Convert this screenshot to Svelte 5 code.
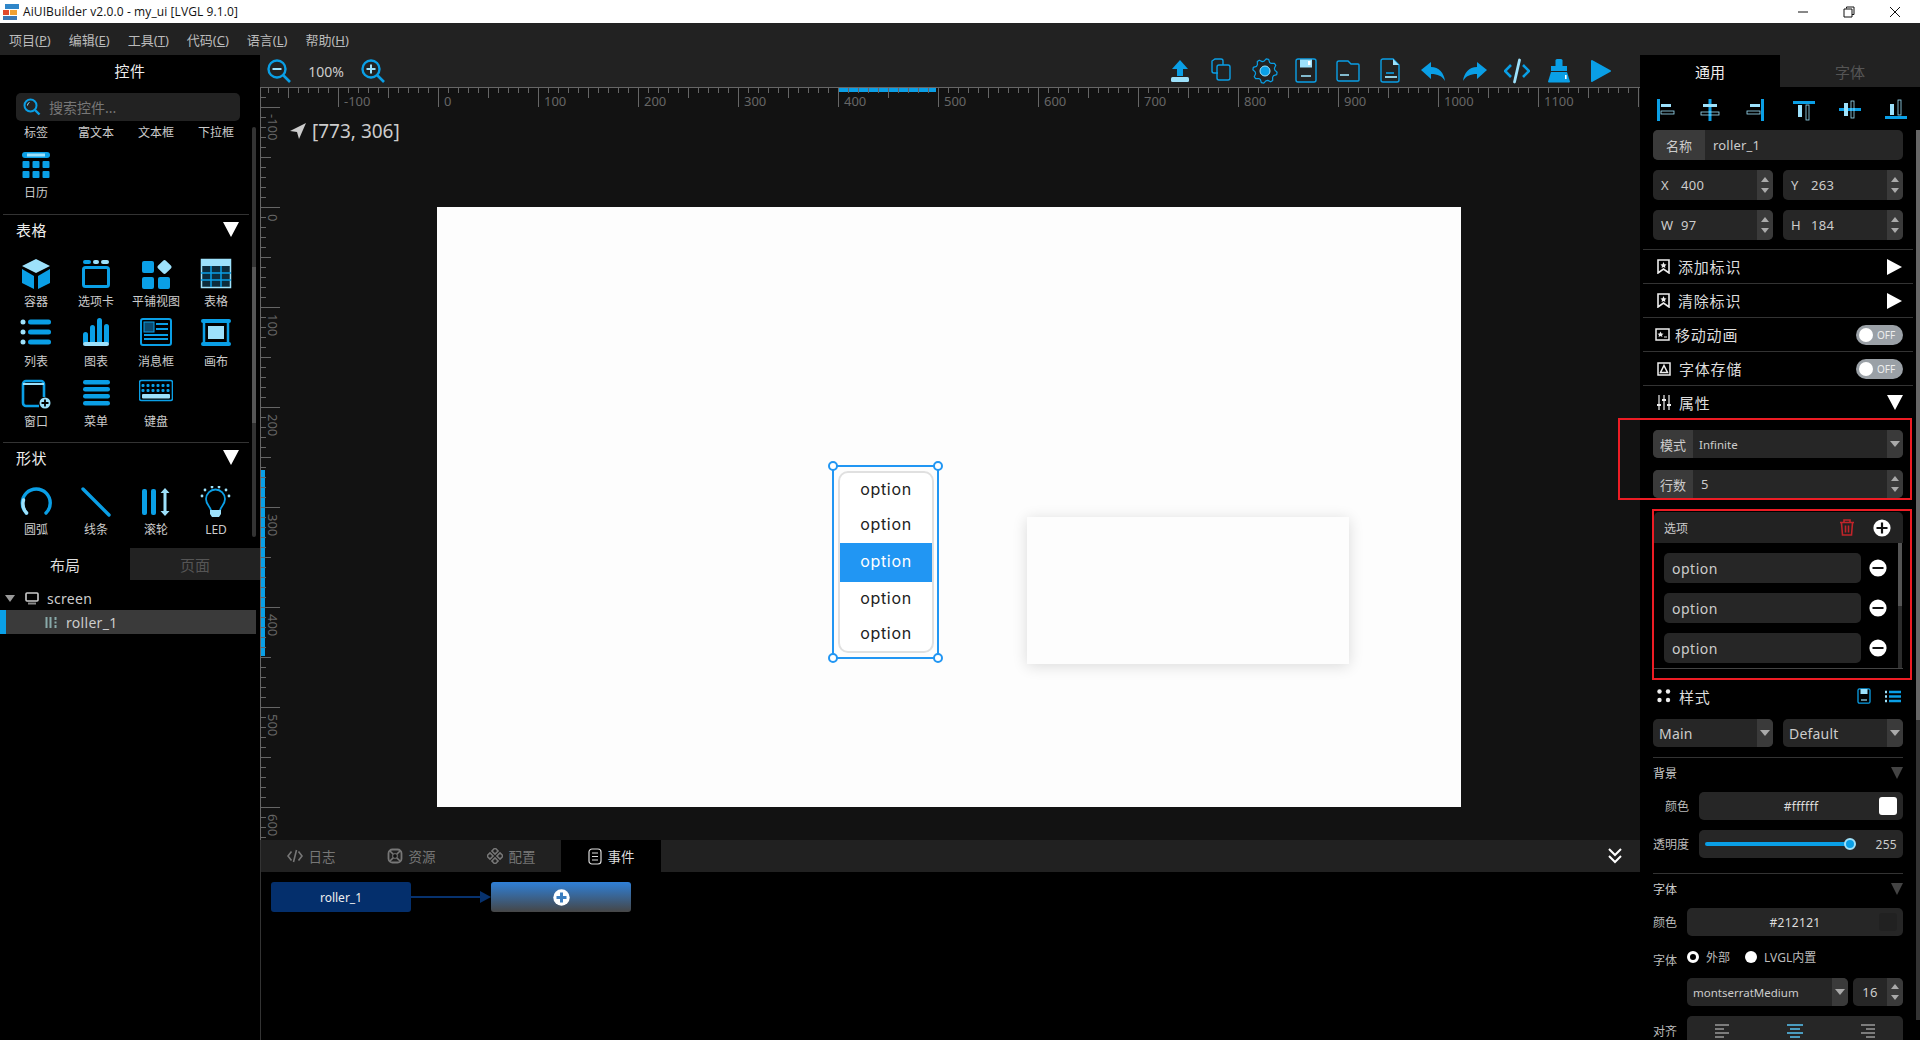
<script>
  const B = '#0a9fe6';
  const L = '#9de1fb';

  // widget palette icons, drawn on a 32x32 box
  const icons = {
    calendar: `<rect x="2" y="3" width="28" height="6" rx="3" fill="${B}"/><rect x="7" y="4.5" width="18" height="3" fill="${L}"/>` +
      [2.5, 12.5, 22.5].map((x) => [12, 22].map((y) => `<rect x="${x}" y="${y}" width="7" height="7" rx="1" fill="${B}"/>`).join('')).join(''),
    container: `<polygon points="16,1 30,8 16,15 2,8" fill="${L}"/><polygon points="2,11 14,18 14,31 2,25" fill="${B}"/><polygon points="30,11 18,18 18,31 30,25" fill="${B}"/>`,
    tab: `<rect x="3" y="2" width="8" height="4" rx="2" fill="${B}"/><rect x="13" y="2" width="6" height="4" rx="2" fill="${L}"/><rect x="21" y="2" width="8" height="4" rx="2" fill="${L}"/><rect x="3.5" y="9.5" width="25" height="19" rx="2" fill="none" stroke="${B}" stroke-width="3"/>`,
    tile: `<rect x="2" y="3" width="12" height="12" rx="2" fill="${B}"/><rect x="19" y="3.5" width="11" height="11" rx="2" fill="${L}" transform="rotate(45 24.5 9)"/><rect x="2" y="19" width="12" height="12" rx="2" fill="${B}"/><rect x="18" y="19" width="12" height="12" rx="2" fill="${B}"/>`,
    table: `<rect x="1.5" y="1.5" width="29" height="28" fill="#0c2c3c" stroke="${L}" stroke-width="1.5"/><rect x="1" y="1" width="30" height="7" fill="${L}"/><path d="M11 8v21M21 8v21M1 15h30M1 22h30" stroke="${B}" stroke-width="1.5"/>`,
    list: `<circle cx="3" cy="4" r="2.5" fill="${L}"/><rect x="8" y="1.5" width="23" height="5" rx="2.5" fill="${B}"/><circle cx="3" cy="14" r="2.5" fill="${L}"/><rect x="8" y="11.5" width="23" height="5" rx="2.5" fill="${B}"/><circle cx="3" cy="24" r="2.5" fill="${L}"/><rect x="8" y="21.5" width="23" height="5" rx="2.5" fill="${B}"/>`,
    chart: `<rect x="3" y="14" width="5" height="12" rx="2.5" fill="${B}"/><rect x="10" y="7" width="5" height="19" rx="2.5" fill="${B}"/><rect x="17" y="0" width="5" height="26" rx="2.5" fill="${B}"/><rect x="24" y="6" width="5" height="20" rx="2.5" fill="${B}"/><rect x="3" y="24" width="26" height="4" rx="2" fill="${L}"/>`,
    msgbox: `<rect x="1" y="1" width="30" height="26" rx="2" fill="none" stroke="${B}" stroke-width="2"/><rect x="4" y="4" width="10" height="10" fill="#0b4a6e" stroke="${B}"/><path d="M16 6h12M16 11h12M4 17h24M4 21h24" stroke="${B}" stroke-width="1.8"/>`,
    canvas: `<rect x="4" y="3" width="24" height="23" fill="none" stroke="${B}" stroke-width="2.5"/><rect x="8" y="8" width="16" height="13" fill="${L}"/><rect x="1" y="1" width="30" height="4" rx="2" fill="${B}"/><rect x="1" y="24" width="30" height="4" rx="2" fill="${B}"/>`,
    window: `<path d="M24 19V6a3 3 0 0 0-3-3H6a3 3 0 0 0-3 3v19a3 3 0 0 0 3 3h13" fill="none" stroke="${B}" stroke-width="2.6"/><path d="M3 6h21" stroke="${L}" stroke-width="2"/><circle cx="25" cy="25" r="5.5" fill="${L}"/><path d="M25 21.5v7M21.5 25h7" stroke="#000" stroke-width="1.8"/>`,
    menu: `<rect x="3" y="2" width="27" height="4.5" rx="2.2" fill="${B}"/><rect x="3" y="9" width="27" height="4.5" rx="2.2" fill="${B}"/><rect x="3" y="16" width="27" height="4.5" rx="2.2" fill="${B}"/><rect x="3" y="23" width="27" height="4.5" rx="2.2" fill="${B}"/>`,
    keyboard: `<rect x="0.5" y="0.5" width="33" height="20" rx="2" fill="none" stroke="${B}" stroke-width="1.6"/>` +
      [3.5, 8.5, 13.5, 18.5, 23.5, 28.5].map((x) => `<rect x="${x - 1}" y="4" width="3" height="3" rx="1" fill="${B}"/><rect x="${x - 1}" y="9" width="3" height="3" rx="1" fill="${B}"/>`).join('') +
      `<rect x="3" y="14" width="28" height="4.5" rx="1" fill="${L}"/>`,
    arc: `<path d="M6.5 27A14 14 0 1 1 26 27" fill="none" stroke="${B}" stroke-width="3.4" stroke-linecap="round"/><path d="M6.5 27A14 14 0 0 1 3.5 14" fill="none" stroke="${L}" stroke-width="3.4" stroke-linecap="round"/>`,
    line: `<path d="M3 3L29 29" stroke="${B}" stroke-width="3.4" stroke-linecap="round"/>`,
    roller: `<rect x="2" y="3" width="5" height="26" rx="2" fill="${B}"/><rect x="11" y="3" width="5" height="26" rx="2" fill="${B}"/><path d="M25 2l4.5 5h-3v18h3L25 30l-4.5-5h3V7h-3z" fill="${L}"/>`,
    led: `<path d="M11 25c0-4-5-6-5-12a9.5 9.5 0 0 1 19 0c0 6-5 8-5 12" fill="none" stroke="${B}" stroke-width="1.8"/><path d="M10 24h11v4l-2 3h-7l-2-3z" fill="${L}"/><circle cx="2" cy="10" r="1.4" fill="${L}"/><circle cx="5" cy="4" r="1.4" fill="${L}"/><circle cx="12" cy="1" r="1.4" fill="${L}"/><circle cx="19" cy="1" r="1.4" fill="${L}"/><circle cx="26" cy="4" r="1.4" fill="${L}"/><circle cx="29" cy="10" r="1.4" fill="${L}"/>`
  };

  // 8 toothed gear outline
  const gear = Array.from({ length: 32 }, (_, i) => {
    const a = (i / 32) * Math.PI * 2 + 0.1;
    const r = i % 4 < 2 ? 12.2 : 9.8;
    return `${(13 + r * Math.cos(a)).toFixed(1)},${(13 + r * Math.sin(a)).toFixed(1)}`;
  }).join(' ');

  const tools = [
    `<path d="M12 2l8 9h-5v7H9v-7H4z" fill="${B}"/><rect x="3" y="19" width="18" height="5" rx="1.5" fill="${L}"/>`,
    `<path d="M8 15H4a2 2 0 0 1-2-2V3l3-2h6a2 2 0 0 1 2 2v4" fill="none" stroke="${B}" stroke-width="1.4"/><rect x="7" y="7" width="13" height="15" rx="2" fill="none" stroke="${B}" stroke-width="1.4"/>`,
    `<polygon points="${gear}" fill="none" stroke="${B}" stroke-width="1.2" stroke-linejoin="round"/><circle cx="13" cy="13" r="5" fill="${B}" stroke="${L}" stroke-width="1"/>`,
    `<rect x="2" y="1" width="20" height="23" rx="2" fill="none" stroke="${B}" stroke-width="1.4"/><path d="M6 1.5h12v8H6z" fill="${L}"/><rect x="14" y="3" width="2.5" height="4" fill="#fff"/><path d="M7 18h10" stroke="${L}" stroke-width="1.6"/>`,
    `<path d="M1 5a2 2 0 0 1 2-2h9l3 3h7a1 1 0 0 1 1 1v15a1 1 0 0 1-1 1H3a2 2 0 0 1-2-2z" fill="none" stroke="${B}" stroke-width="1.4"/><path d="M4 17h9" stroke="${L}" stroke-width="1.6"/>`,
    `<path d="M3 3a2 2 0 0 1 2-2h10l6 6v15a2 2 0 0 1-2 2H5a2 2 0 0 1-2-2z" fill="none" stroke="${B}" stroke-width="1.4"/><path d="M15 1l6 6h-6z" fill="${L}"/><path d="M8 15h8" stroke="${B}" stroke-width="1.6"/><path d="M7 19h12" stroke="${L}" stroke-width="1.8"/>`,
    `<path d="M1 12l10-8v5c8 0 13 6 14 14-3-5-7-7-14-7v5z" fill="${B}"/>`,
    `<path d="M25 12L15 4v5C7 9 2 15 1 23c3-5 7-7 14-7v5z" fill="${B}"/>`,
    `<path d="M7 7l-6 6 6 6" fill="none" stroke="${B}" stroke-width="2.6"/><path d="M19 7l6 6-6 6" fill="none" stroke="${B}" stroke-width="2.6"/><path d="M15.5 2l-5 22" stroke="${L}" stroke-width="2.8" stroke-linecap="round"/>`,
    `<rect x="9.5" y="1" width="7" height="8" rx="1.5" fill="${B}"/><rect x="5" y="8" width="16" height="5" fill="${B}"/><path d="M5 14h16l3 9.500a1 1 0 0 1-1 1H3a1 1 0 0 1-1-1z" fill="${B}"/><rect x="19" y="17" width="1.6" height="4" fill="#fff"/>`,
    `<path d="M4 3l18 10L4 23z" fill="${B}" stroke="${B}" stroke-linejoin="round" stroke-width="2"/>`
  ];

  const aligns = [
    `<g transform="translate(2 0)"><rect x="1" y="1" width="3" height="22" fill="${B}"/><rect x="5" y="6" width="10" height="3" fill="${L}"/><rect x="5" y="13" width="13" height="3" fill="none" stroke="${L}" stroke-width="0.8"/></g>`,
    `<g transform="translate(-2 0)"><rect x="10.5" y="1" width="3" height="22" fill="${B}"/><rect x="5" y="6" width="14" height="3" fill="${L}"/><rect x="3" y="14" width="18" height="3" fill="none" stroke="${L}" stroke-width="0.8"/></g>`,
    `<g transform="translate(-5 0)"><rect x="20" y="1" width="3" height="22" fill="${B}"/><rect x="9" y="6" width="10" height="3" fill="${L}"/><rect x="6" y="13" width="13" height="3" fill="none" stroke="${L}" stroke-width="0.8"/></g>`,
    `<rect x="1" y="3" width="22" height="3" fill="${B}"/><rect x="6" y="7" width="4" height="12" fill="${L}"/><rect x="14" y="7" width="3" height="15" fill="none" stroke="${L}" stroke-width="0.8"/>`,
    `<rect x="1" y="10" width="22" height="3" fill="${B}"/><rect x="6" y="5" width="4" height="13" fill="${L}"/><rect x="13" y="3" width="3" height="17" fill="none" stroke="${L}" stroke-width="0.8"/>`,
    `<rect x="1" y="18" width="22" height="3" fill="${B}"/><rect x="6" y="6" width="4" height="11" fill="${L}"/><rect x="14" y="2" width="3" height="15" fill="none" stroke="${L}" stroke-width="0.8"/>`
  ];

  const menus = [['项目(', 'P', ')'], ['编辑(', 'E', ')'], ['工具(', 'T', ')'], ['代码(', 'C', ')'], ['语言(', 'L', ')'], ['帮助(', 'H', ')']];

  const partial = [['标签'], ['富文本'], ['文本框'], ['下拉框'], ['日历', 'calendar']];
  const tableItems = [
    ['容器', 'container'], ['选项卡', 'tab'], ['平铺视图', 'tile'], ['表格', 'table'],
    ['列表', 'list'], ['图表', 'chart'], ['消息框', 'msgbox'], ['画布', 'canvas'],
    ['窗口', 'window'], ['菜单', 'menu'], ['键盘', 'keyboard']
  ];
  const shapeItems = [['圆弧', 'arc'], ['线条', 'line'], ['滚轮', 'roller'], ['LED', 'led']];

  const ox = 178;
  const oy = 120;
  const hTicks = [];
  for (let v = -170; v <= 1200; v += 10) hTicks.push(v);
  const vTicks = [];
  for (let v = -110; v <= 630; v += 10) vTicks.push(v);
  const tickLen = (v) => (v % 100 === 0 ? 20 : v % 50 === 0 ? 11 : 6);
</script>

{#snippet spin()}<span class="spin"><span class="tri up"></span><span class="tri down"></span></span>{/snippet}
{#snippet drop()}<span class="drop"><span class="tri big"></span></span>{/snippet}
{#snippet bookmark()}
  <svg class="ric" width="13" height="15" viewBox="0 0 13 15"><path d="M1 1h11v13l-5.5-4L1 14z" fill="none" stroke="#eee" stroke-width="1.6"/><path d="M6.500 3l1 2.200 2 .2-1.500 1.500.4 2-1.900-1-1.900 1 .4-2L3.500 5.400l2-.2z" fill="#eee"/></svg>
{/snippet}
{#snippet circle(kind)}
  <svg width="18" height="18" viewBox="0 0 18 18"><circle cx="9" cy="9" r="8.600" fill="#fff"/><path d={kind === 'plus' ? 'M3.500 9h11M9 3.500v11' : 'M3.500 9h11'} stroke="#111" stroke-width="2.200"/></svg>
{/snippet}
{#snippet alignLines(color, lo)}
  <svg width="16" height="14" viewBox="0 0 16 14"><path d={lo} stroke={color} stroke-width="1.600"/></svg>
{/snippet}

<div class="app">
  <header class="titlebar">
    <svg class="logo" width="16" height="16" viewBox="0 0 16 16"><rect x="2" y="0" width="14" height="5" fill="#2f86c9"/><rect x="0" y="6" width="6" height="5" fill="#e2492b"/><rect x="7" y="6" width="7" height="5" fill="#f0a033"/><rect x="0" y="12" width="14" height="4" fill="#3c78b5"/></svg>
    <span class="apptitle">AiUIBuilder v2.0.0 - my_ui [LVGL 9.1.0]</span>
    <div class="winctl">
      <span class="wbtn"><svg width="12" height="12" viewBox="0 0 12 12"><path d="M1 6h10" stroke="#111"/></svg></span>
      <span class="wbtn"><svg width="12" height="12" viewBox="0 0 12 12"><path d="M3.500 2.500V1h7.500v7.500H9M1 3h8v8H1z" fill="none" stroke="#111"/></svg></span>
      <span class="wbtn"><svg width="12" height="12" viewBox="0 0 12 12"><path d="M1 1l10 10M11 1L1 11" stroke="#111"/></svg></span>
    </div>
  </header>

  <nav class="menubar">
    {#each menus as m}
      <span class="menu">{m[0]}<u>{m[1]}</u>{m[2]}</span>
    {/each}
  </nav>

  <div class="main">
    <aside class="left">
      <div class="ltitle">控件</div>
      <label class="search">
        <svg width="18" height="18" viewBox="0 0 18 18"><circle cx="7.500" cy="7.500" r="6" fill="none" stroke="#0a9fe6" stroke-width="2"/><path d="M12 12l4.500 4.500" stroke="#0a9fe6" stroke-width="2.400"/><path d="M4.500 7.500a3 3 0 0 1 2-3" stroke="#9de1fb" fill="none"/></svg>
        <span>搜索控件...</span>
      </label>

      <div class="palette">
        <div class="pinner">
          <section class="pgroup first">
            <div class="pgrid">
              {#each partial as it}
                <div class="pitem">
                  <svg class="picon" width="32" height="32" viewBox="0 0 32 32">{#if it[1]}{@html icons[it[1]]}{/if}</svg>
                  <span>{it[0]}</span>
                </div>
              {/each}
            </div>
          </section>
          <section class="pgroup">
            <div class="phead"><span>表格</span><span class="tri white"></span></div>
            <div class="pgrid">
              {#each tableItems as it}
                <div class="pitem">
                  <svg class="picon" width={it[1] === 'keyboard' ? 34 : 32} height="32" viewBox={it[1] === 'keyboard' ? '0 -2 34 32' : '0 0 32 32'}>{@html icons[it[1]]}</svg>
                  <span>{it[0]}</span>
                </div>
              {/each}
            </div>
          </section>
          <section class="pgroup last">
            <div class="phead"><span>形状</span><span class="tri white"></span></div>
            <div class="pgrid">
              {#each shapeItems as it}
                <div class="pitem">
                  <svg class="picon" width="32" height="32" viewBox="0 0 32 32">{@html icons[it[1]]}</svg>
                  <span>{it[0]}</span>
                </div>
              {/each}
            </div>
          </section>
        </div>
        <div class="ptrack"><div class="pthumb"></div></div>
      </div>

      <div class="ltabs">
        <span class="ltab on">布局</span>
        <span class="ltab">页面</span>
      </div>
      <div class="tree">
        <div class="tnode">
          <span class="tri small"></span>
          <svg width="14" height="13" viewBox="0 0 14 13"><rect x="1" y="1" width="12" height="8" rx="1" fill="none" stroke="#ccc" stroke-width="1.600"/><rect x="3" y="10.500" width="8" height="2" fill="#888"/></svg>
          <span>screen</span>
        </div>
        <div class="tnode sel">
          <svg width="13" height="13" viewBox="0 0 13 13"><path d="M1.500 1v11M5.500 1v11" stroke="#8aa" stroke-width="2"/><path d="M10.500 1v3M10.500 5.500v2M10.500 9v3" stroke="#8aa" stroke-width="2"/></svg>
          <span>roller_1</span>
        </div>
      </div>
    </aside>

    <div class="center">
      <div class="toolbar">
        <svg class="zoomic" width="24" height="24" viewBox="0 0 24 24"><circle cx="10" cy="10" r="8.500" fill="none" stroke="#0a9fe6" stroke-width="2.400"/><path d="M16 16l7 7" stroke="#0a9fe6" stroke-width="2.600"/><path d="M5.500 10h9" stroke="#9de1fb" stroke-width="2"/></svg>
        <span class="pct">100%</span>
        <svg class="zoomic" width="24" height="24" viewBox="0 0 24 24"><circle cx="10" cy="10" r="8.500" fill="none" stroke="#0a9fe6" stroke-width="2.400"/><path d="M16 16l7 7" stroke="#0a9fe6" stroke-width="2.600"/><path d="M5.500 10h9M10 5.500v9" stroke="#9de1fb" stroke-width="2"/></svg>
        <div class="tools">
          {#each tools as t}
            <span class="tool"><svg width="26" height="26" viewBox="0 0 26 26">{@html t}</svg></span>
          {/each}
        </div>
      </div>

      <div class="canvas">
        <svg class="ruler" width="1380" height="753" shape-rendering="crispEdges">
          <rect x="579" y="1" width="97" height="4" fill="#0a9fe6"/>
          <rect x="1" y="383" width="4" height="186" fill="#0a9fe6"/>
          <path d="M0 0.500H1380M0.500 0V753" stroke="#666"/>
          {#each hTicks as v}
            <path d="M{ox + v + 0.5} 0V{tickLen(v)}" stroke="#666" stroke-width={v % 100 === 0 ? 1.500 : 1}/>
            {#if v % 100 === 0 && v < 1200}
              <text x={ox + v + 6} y="19" class="rlabel">{v}</text>
            {/if}
          {/each}
          {#each vTicks as v}
            <path d="M0 {oy + v + 0.5}H{tickLen(v)}" stroke="#666" stroke-width={v % 100 === 0 ? 1.500 : 1}/>
            {#if v % 100 === 0}
              <text transform="translate(8 {oy + v + 7}) rotate(90)" class="rlabel">{v}</text>
            {/if}
          {/each}
        </svg>

        <div class="coords">
          <svg width="16" height="16" viewBox="0 0 16 16"><path d="M16 0L0 8l7 1 2 7z" fill="#ccc"/></svg>
          <span>[773, 306]</span>
        </div>

        <div class="screen">
          <div class="frame">
            <i class="hd tl"></i><i class="hd tr"></i><i class="hd bl"></i><i class="hd br"></i>
            <div class="roller">
              <div class="ropt">option</div>
              <div class="ropt">option</div>
              <div class="ropt cur">option</div>
              <div class="ropt">option</div>
              <div class="ropt">option</div>
            </div>
          </div>
          <div class="card"></div>
        </div>
      </div>

      <div class="bottom">
        <div class="btabs">
          <span class="btab">
            <svg width="16" height="14" viewBox="0 0 16 14"><path d="M4.500 2.500L1 7l3.500 4.500M11.500 2.500L15 7l-3.500 4.500M9.500 1L6.500 13" fill="none" stroke="#777" stroke-width="1.600"/></svg>
            日志
          </span>
          <span class="btab">
            <svg width="16" height="16" viewBox="0 0 16 16"><rect x="1.500" y="1.500" width="13" height="13" rx="4" fill="none" stroke="#777" stroke-width="1.800"/><path d="M3 3l10 10M13 3L3 13" stroke="#777" stroke-width="1.600"/><circle cx="8" cy="8" r="2.400" fill="#111" stroke="#777"/></svg>
            资源
          </span>
          <span class="btab">
            <svg width="16" height="16" viewBox="0 0 16 16"><g fill="none" stroke="#777" stroke-width="1.500"><rect x="5.800" y="0.800" width="4.400" height="4.400" transform="rotate(45 8 3)"/><rect x="5.800" y="10.800" width="4.400" height="4.400" transform="rotate(45 8 13)"/><rect x="0.800" y="5.800" width="4.400" height="4.400" transform="rotate(45 3 8)"/><rect x="10.800" y="5.800" width="4.400" height="4.400" transform="rotate(45 13 8)"/></g></svg>
            配置
          </span>
          <span class="btab on">
            <svg width="14" height="17" viewBox="0 0 14 17"><rect x="1" y="1" width="12" height="15" rx="3" fill="none" stroke="#ddd" stroke-width="1.200"/><path d="M4 5h6M4 8.500h6M4 12h6" stroke="#ddd"/></svg>
            事件
          </span>
          <svg class="collapse" width="14" height="16" viewBox="0 0 14 16"><path d="M1 1l6 6 6-6M1 8l6 6 6-6" fill="none" stroke="#fff" stroke-width="2"/></svg>
        </div>
        <div class="flow">
          <div class="node">roller_1</div>
          <div class="wire"><span></span><i></i></div>
          <div class="node add">
            <svg width="17" height="17" viewBox="0 0 17 17"><circle cx="8.500" cy="8.500" r="8.200" fill="#fff"/><path d="M3.500 8.500h10M8.500 3.500v10" stroke="#3b7ec0" stroke-width="3"/></svg>
          </div>
        </div>
      </div>
    </div>

    <aside class="right">
      <div class="rtabs">
        <span class="rtab on">通用</span>
        <span class="rtab">字体</span>
      </div>
      <div class="rscroll"></div>
      <div class="alignrow">
        {#each aligns as a}
          <svg width="24" height="24" viewBox="0 0 24 24">{@html a}</svg>
        {/each}
      </div>

      <div class="field name"><span class="flabel">名称</span><span class="fval">roller_1</span></div>
      <div class="pair">
        <div class="field"><span class="axis">X</span><span class="num">400</span>{@render spin()}</div>
        <div class="field"><span class="axis">Y</span><span class="num">263</span>{@render spin()}</div>
      </div>
      <div class="pair">
        <div class="field"><span class="axis">W</span><span class="num">97</span>{@render spin()}</div>
        <div class="field"><span class="axis">H</span><span class="num">184</span>{@render spin()}</div>
      </div>

      <div class="srows">
        <div class="srow">{@render bookmark()}<span>添加标识</span><span class="tri rightw"></span></div>
        <div class="srow">{@render bookmark()}<span>清除标识</span><span class="tri rightw"></span></div>
        <div class="srow">
          <svg class="ric anim" width="15" height="13" viewBox="0 0 15 13"><rect x="1" y="1" width="13" height="11" fill="none" stroke="#eee" stroke-width="1.500"/><path d="M5.500 3.500l1 2 2 .2-1.500 1.400.4 2-1.900-1-1.900 1 .4-2L2.500 5.700l2-.2z" fill="#eee"/><path d="M9 9h3" stroke="#eee"/></svg>
          <span>移动动画</span>
          <span class="toggle"><i></i>OFF</span>
        </div>
        <div class="srow">
          <svg class="ric" width="14" height="14" viewBox="0 0 14 14"><rect x="1" y="1" width="12" height="12" fill="none" stroke="#eee" stroke-width="1.500"/><path d="M7 3.500l3.500 7h-7z" fill="none" stroke="#eee" stroke-width="1.500"/></svg>
          <span>字体存储</span>
          <span class="toggle"><i></i>OFF</span>
        </div>
        <div class="srow noline">
          <svg class="ric" width="14" height="15" viewBox="0 0 14 15"><path d="M2 0v15M7 0v15M12 0v15" stroke="#eee" stroke-width="1.200"/><path d="M0 10h4M5 5h4M10 10h4" stroke="#eee" stroke-width="2"/></svg>
          <span>属性</span>
          <span class="tri white"></span>
        </div>
      </div>

      <div class="attrs">
        <div class="redbox one"></div>
        <div class="field tight"><span class="flabel short">模式</span><span class="fval small">Infinite</span>{@render drop()}</div>
        <div class="field tight"><span class="flabel short">行数</span><span class="fval">5</span>{@render spin()}</div>
      </div>

      <div class="optwrap">
        <div class="optpanel">
          <div class="opthead">
            <span>选项</span>
            <svg class="trash" width="16" height="17" viewBox="0 0 16 17"><path d="M1 3.500h14M5 3V1h6v2M2.500 4l1 12h9l1-12M6.500 6.500v7M9.500 6.500v7" fill="none" stroke="#c0242a" stroke-width="1.600"/></svg>
            {@render circle('plus')}
          </div>
          <div class="optlist">
            {#each [1, 2, 3] as n}
              <div class="optrow"><span class="optinput">option</span>{@render circle('minus')}</div>
            {/each}
            <div class="opttrack"><div class="optthumb"></div></div>
          </div>
        </div>
      </div>

      <div class="stylehead">
        <svg class="ric" width="14" height="14" viewBox="0 0 14 14"><circle cx="2.500" cy="2.500" r="2.200" fill="#eee"/><circle cx="11" cy="2.500" r="2.200" fill="#eee"/><circle cx="2.500" cy="11" r="2.200" fill="#eee"/><circle cx="11" cy="11" r="2.200" fill="#eee"/></svg>
        <span>样式</span>
        <svg class="hic" width="14" height="16" viewBox="0 0 14 16"><rect x="1" y="0.800" width="12" height="14.400" rx="1.500" fill="none" stroke="#0a9fe6" stroke-width="1.300"/><rect x="3.500" y="1" width="7" height="5" fill="#9de1fb"/><path d="M4 12h6" stroke="#9de1fb" stroke-width="1.200"/></svg>
        <svg class="hic last" width="16" height="13" viewBox="0 0 16 13"><path d="M0 2h2M0 6.500h2M0 11h2" stroke="#9de1fb" stroke-width="2.400"/><path d="M4 2h12M4 6.500h12M4 11h12" stroke="#0a9fe6" stroke-width="2.400"/></svg>
      </div>
      <div class="pair sel">
        <div class="field tight big"><span class="fval">Main</span>{@render drop()}</div>
        <div class="field tight big"><span class="fval">Default</span>{@render drop()}</div>
      </div>

      <div class="group">
        <div class="ghead"><span>背景</span><span class="tri gray"></span></div>
        <div class="prop">
          <span class="plabel indent">颜色</span>
          <div class="field tight grow colorbox"><span class="hex">#ffffff</span><i class="swatch"></i></div>
        </div>
        <div class="prop">
          <span class="plabel">透明度</span>
          <div class="field tight grow">
            <span class="slider"><i class="knob"></i></span>
            <span class="slval">255</span>
          </div>
        </div>
      </div>

      <div class="group fontg">
        <div class="ghead"><span>字体</span><span class="tri gray"></span></div>
        <div class="prop short">
          <span class="plabel">颜色</span>
          <div class="field tight grow colorbox"><span class="hex">#212121</span><i class="swatch dark"></i></div>
        </div>
        <div class="prop short radio">
          <span class="plabel low">字体</span>
          <div class="radios">
            <span class="rad"><i class="dot on"></i>外部</span>
            <span class="rad"><i class="dot"></i>LVGL内置</span>
          </div>
        </div>
        <div class="fontsel">
          <div class="field tight fname"><span class="fval small">montserratMedium</span>{@render drop()}</div>
          <div class="field tight fsize"><span class="fval c">16</span>{@render spin()}</div>
        </div>
        <div class="prop short">
          <span class="plabel">对齐</span>
          <div class="field grow alignbox">
            {@render alignLines('#999', 'M0 1h14M0 5h9M0 9h14M0 13h9')}
            {@render alignLines('#58c4f2', 'M0 1h16M3 5h10M0 9h16M3 13h10')}
            {@render alignLines('#999', 'M2 1h14M7 5h9M2 9h14M7 13h9')}
          </div>
        </div>
      </div>
    </aside>
  </div>
</div>

<style>
  :global(body) {
    margin: 0;
    background: #000;
  }

  .app {
    width: 1920px;
    height: 1040px;
    display: flex;
    flex-direction: column;
    overflow: hidden;
    background: #000;
    color: #ddd;
    font-family: 'Noto Sans', 'Noto Sans CJK SC', sans-serif;
    font-size: 13px;
  }

  .titlebar {
    height: 23px;
    flex: none;
    background: #fff;
    color: #111;
    display: flex;
    align-items: center;
  }

  .logo {
    margin: 0 4px 0 3px;
  }

  .apptitle {
    font-family: 'Open Sans', sans-serif;
    font-size: 12px;
    letter-spacing: 0.1px;
  }

  .winctl {
    margin-left: auto;
    margin-right: 2px;
    display: flex;
  }

  .wbtn {
    width: 46px;
    height: 23px;
    display: flex;
    align-items: center;
    justify-content: center;
  }

  .menubar {
    height: 32px;
    flex: none;
    background: #222;
    display: flex;
    align-items: center;
    gap: 18px;
    padding-left: 9px;
    color: #bbb;
    font-size: 13px;
  }

  .main {
    flex: 1;
    display: flex;
    min-height: 0;
  }

  .tri {
    display: inline-block;
    width: 0;
    height: 0;
    border-left: 4px solid transparent;
    border-right: 4px solid transparent;
    border-top: 5px solid #aaa;
  }

  .tri.up {
    border-top: none;
    border-bottom: 5px solid #aaa;
  }

  .tri.down {
    border-top: 5px solid #aaa;
  }

  .tri.big {
    border-left-width: 5px;
    border-right-width: 5px;
    border-top-width: 6px;
  }

  .tri.white {
    border-left-width: 8px;
    border-right-width: 8px;
    border-top: 15px solid #fff;
  }

  .tri.gray {
    border-left-width: 6px;
    border-right-width: 6px;
    border-top: 12px solid #444;
  }

  .tri.rightw {
    border-top: 8px solid transparent;
    border-bottom: 8px solid transparent;
    border-left: 15px solid #fff;
    border-right: none;
    margin-left: auto;
    margin-right: 1px;
  }

  .tri.small {
    border-left-width: 5px;
    border-right-width: 5px;
    border-top: 7px solid #999;
    margin-right: 2px;
  }

  /* left panel */
  .left {
    width: 260px;
    flex: none;
    background: #000;
    display: flex;
    flex-direction: column;
  }

  .ltitle {
    height: 32px;
    line-height: 32px;
    text-align: center;
    font-size: 15px;
    letter-spacing: 0.5px;
    color: #eee;
  }

  .search {
    height: 28px;
    margin: 6px 20px 0 16px;
    background: #222;
    border-radius: 5px;
    display: flex;
    align-items: center;
    gap: 8px;
    padding-left: 7px;
    color: #777;
    font-size: 14px;
  }

  .palette {
    position: relative;
    height: 427px;
    overflow: hidden;
  }

  .pinner {
    margin-top: -32px;
  }

  .pgroup {
    margin: 0 11px 0 3px;
    border-bottom: 1px solid #333;
    padding-bottom: 11px;
  }

  .pgroup.first {
    padding-bottom: 12px;
  }

  .pgroup.last {
    border-bottom: none;
  }

  .phead {
    height: 32px;
    box-sizing: border-box;
    padding: 0 10px 3px 13px;
    display: flex;
    align-items: center;
    justify-content: space-between;
    font-size: 15px;
    letter-spacing: 0.5px;
    color: #eee;
    margin-bottom: 11px;
  }

  .pgrid {
    display: grid;
    grid-template-columns: repeat(4, 60px);
    row-gap: 7px;
    margin-left: 3px;
  }

  .pitem {
    display: flex;
    flex-direction: column;
    align-items: center;
    gap: 3px;
    font-size: 12px;
    line-height: 18px;
    color: #ccc;
    height: 53px;
  }

  .ptrack {
    position: absolute;
    right: 4px;
    top: 6px;
    width: 4px;
    height: 410px;
    background: #333;
    border-radius: 2px;
  }

  .pthumb {
    width: 4px;
    height: 156px;
    margin-top: 140px;
    background: #555;
  }

  .ltabs {
    display: flex;
    height: 32px;
  }

  .ltab {
    flex: 1;
    display: flex;
    align-items: center;
    justify-content: center;
    font-size: 15px;
    background: #222;
    color: #555;
  }

  .ltab.on {
    background: #000;
    color: #ddd;
  }

  .tree {
    padding-top: 6px;
  }

  .tnode {
    height: 24px;
    display: flex;
    align-items: center;
    gap: 8px;
    padding-left: 5px;
    font-size: 14px;
    letter-spacing: 0.3px;
    color: #ccc;
  }

  .tnode.sel {
    padding-left: 39px;
    width: 211px;
    background: #3a3a3a;
    border-left: 6px solid #0a9fe6;
  }

  /* center */
  .center {
    width: 1380px;
    flex: none;
    display: flex;
    flex-direction: column;
  }

  .toolbar {
    height: 32px;
    flex: none;
    background: #222;
    display: flex;
    align-items: center;
    padding-left: 7px;
  }

  .pct {
    width: 70px;
    text-align: center;
    font-size: 14px;
    color: #ccc;
  }

  .tools {
    margin-left: auto;
    margin-right: 18px;
    display: flex;
  }

  .tool {
    width: 42px;
    display: flex;
    justify-content: center;
  }

  .canvas {
    position: relative;
    height: 753px;
    flex: none;
    background: #121212;
    overflow: hidden;
  }

  .ruler {
    position: absolute;
    left: 0;
    top: 0;
  }

  .rlabel {
    font-size: 13px;
    fill: #666;
  }

  .coords {
    position: absolute;
    left: 30px;
    top: 30px;
    display: flex;
    align-items: center;
    gap: 6px;
    font-size: 19px;
    line-height: 28px;
    color: #ccc;
  }

  .screen {
    position: absolute;
    left: 177px;
    top: 120px;
    width: 1024px;
    height: 600px;
    background: #fdfdfd;
  }

  .frame {
    position: absolute;
    left: 395px;
    top: 258px;
    width: 99px;
    height: 186px;
    border: 2px solid #2196f3;
    padding: 4px 0 0 4px;
  }

  .hd {
    position: absolute;
    width: 6px;
    height: 6px;
    border: 2px solid #2196f3;
    background: #fff;
    border-radius: 50%;
  }

  .hd.tl { left: -6px; top: -6px; }
  .hd.tr { right: -6px; top: -6px; }
  .hd.bl { left: -6px; bottom: -6px; }
  .hd.br { right: -6px; bottom: -6px; }

  .roller {
    width: 92px;
    height: 178px;
    background: #fff;
    border: 2px solid #e0e0e0;
    border-radius: 10px;
    overflow: hidden;
    display: flex;
    flex-direction: column;
    font-family: Inter, 'Noto Sans', sans-serif;
    font-size: 16px;
    letter-spacing: 0.7px;
    color: #212121;
  }

  .ropt {
    flex: 1;
    display: flex;
    align-items: center;
    justify-content: center;
    padding-bottom: 2px;
  }

  .ropt.cur {
    flex: 0 0 37px;
    background: #2196f3;
    color: #fff;
  }

  .card {
    position: absolute;
    left: 590px;
    top: 310px;
    width: 322px;
    height: 147px;
    background: #fdfdfd;
    box-shadow: 0 2px 14px rgba(0, 0, 0, 0.14);
  }

  .bottom {
    flex: 1;
    background: #000;
    border-left: 1px solid #333;
    display: flex;
    flex-direction: column;
  }

  .btabs {
    height: 32px;
    background: #212121;
    display: flex;
    flex: none;
  }

  .btab {
    width: 100px;
    display: flex;
    align-items: center;
    justify-content: center;
    gap: 6px;
    color: #777;
    font-size: 13.5px;
  }

  .btab.on {
    background: #000;
    color: #ddd;
  }

  .collapse {
    margin: 8px 18px 0 auto;
  }

  .flow {
    display: flex;
    align-items: center;
    padding: 10px 0 0 10px;
  }

  .node {
    width: 140px;
    height: 30px;
    border-radius: 3px;
    background: #042f6c;
    color: #eee;
    display: flex;
    align-items: center;
    justify-content: center;
    font-size: 12px;
  }

  .node.add {
    background: linear-gradient(#2f80d8, #464646);
  }

  .wire {
    width: 80px;
    display: flex;
    align-items: center;
  }

  .wire span {
    flex: 1;
    height: 2px;
    background: #07326e;
  }

  .wire i {
    width: 0;
    height: 0;
    border-top: 6px solid transparent;
    border-bottom: 6px solid transparent;
    border-left: 11px solid #07326e;
  }

  /* right panel */
  .right {
    position: relative;
    width: 280px;
    flex: none;
    background: #000;
    display: flex;
    flex-direction: column;
  }

  .rscroll {
    position: absolute;
    right: 0;
    top: 75px;
    width: 4px;
    height: 590px;
    background: #666;
    box-shadow: 0 300px 0 #333;
  }

  .rtabs {
    display: flex;
    height: 32px;
    flex: none;
  }

  .rtab {
    flex: 1;
    display: flex;
    align-items: center;
    justify-content: center;
    font-size: 15px;
    background: #222;
    color: #555;
  }

  .rtab.on {
    background: #000;
    color: #eee;
  }

  .alignrow {
    height: 43px;
    flex: none;
    display: flex;
    align-items: center;
    justify-content: space-between;
    padding: 3px 12px 0 14px;
    box-sizing: border-box;
  }

  .field {
    height: 30px;
    flex: 1;
    background: #262626;
    border-radius: 5px;
    display: flex;
    align-items: center;
    overflow: hidden;
    color: #ccc;
    font-size: 13px;
  }

  .field.tight {
    height: 28px;
    flex: none;
    margin: 0 17px 12px 13px;
  }

  .field.name {
    flex: none;
    margin: 0 17px 10px 13px;
  }

  .flabel {
    width: 52px;
    align-self: stretch;
    display: flex;
    align-items: center;
    justify-content: center;
    background: #3a3a3a;
    flex: none;
  }

  .flabel.short {
    width: 40px;
  }

  .fval {
    flex: 1;
    padding-left: 8px;
    letter-spacing: 0.2px;
  }

  .fval.small {
    padding-left: 6px;
    font-size: 11.5px;
    letter-spacing: 0;
  }

  .fval.c {
    padding-left: 0;
    text-align: center;
  }

  .pair {
    flex: none;
    display: flex;
    gap: 10px;
    margin: 0 17px 10px 13px;
  }

  .axis {
    width: 28px;
    padding-left: 8px;
    box-sizing: border-box;
    flex: none;
  }

  .num {
    flex: 1;
    letter-spacing: 0.3px;
  }

  .spin {
    width: 16px;
    align-self: stretch;
    flex: none;
    background: #3a3a3a;
    display: flex;
    flex-direction: column;
    align-items: center;
    justify-content: space-evenly;
  }

  .drop {
    width: 16px;
    align-self: stretch;
    flex: none;
    background: #3a3a3a;
    display: flex;
    align-items: center;
    justify-content: center;
  }

  .srows {
    flex: none;
    margin: -1px 0 0 3px;
    width: 270px;
    border-top: 1px solid #333;
    box-sizing: border-box;
  }

  .srow {
    height: 34px;
    box-sizing: border-box;
    border-bottom: 1px solid #333;
    display: flex;
    align-items: center;
    padding-right: 10px;
    padding-left: 14px;
    font-size: 15px;
    letter-spacing: 0.8px;
    color: #ddd;
  }

  .srow.noline {
    border-bottom: none;
    height: 32px;
  }

  .srow .tri.white {
    margin-left: auto;
  }

  .ric {
    flex: none;
    margin-right: 8px;
  }

  .ric.anim {
    margin-left: -2px;
    margin-right: 5px;
  }

  .toggle {
    margin-left: auto;
    width: 47px;
    height: 20px;
    border-radius: 10px;
    background: #9aa0a6;
    display: flex;
    align-items: center;
    gap: 4px;
    font-size: 10px;
    letter-spacing: 0;
    color: #eee;
  }

  .toggle i {
    width: 14px;
    height: 14px;
    background: #fff;
    border-radius: 50%;
    margin-left: 3px;
  }

  .attrs {
    position: relative;
    flex: none;
    height: 82px;
    padding-top: 12px;
    box-sizing: border-box;
  }

  .redbox {
    position: absolute;
    border: 2px solid #ed1c24;
    pointer-events: none;
  }

  .redbox.one {
    left: -22px;
    right: 8px;
    top: 0;
    bottom: 0;
  }

  .optwrap {
    flex: none;
    height: 171px;
    margin: 9px 8px 0 12px;
    border: 2px solid #ed1c24;
    box-sizing: border-box;
    padding: 1px 7px 0 0;
  }

  .optpanel {
    height: 157px;
    border-bottom: 1px solid #444;
    border-radius: 5px 5px 0 0;
    overflow: hidden;
    box-sizing: border-box;
  }

  .opthead {
    height: 31px;
    background: #222;
    display: flex;
    align-items: center;
    padding-left: 10px;
    padding-right: 12px;
    color: #ccc;
    font-size: 12px;
  }

  .trash {
    margin-left: auto;
    margin-right: 18px;
  }

  .optlist {
    position: relative;
    padding: 10px 0 0 10px;
    display: flex;
    flex-direction: column;
    gap: 10px;
  }

  .optrow {
    display: flex;
    align-items: center;
    gap: 8px;
  }

  .optinput {
    width: 197px;
    height: 30px;
    border-radius: 5px;
    background: #262626;
    display: flex;
    align-items: center;
    padding-left: 8px;
    box-sizing: border-box;
    font-size: 14px;
    letter-spacing: 0.5px;
    color: #ccc;
  }

  .opttrack {
    position: absolute;
    right: 1px;
    top: 0;
    width: 4px;
    height: 126px;
    background: #2c2c2c;
  }

  .optthumb {
    height: 63px;
    background: #555;
  }

  .stylehead {
    flex: none;
    height: 39px;
    display: flex;
    align-items: center;
    padding: 0 0 7px 14px;
    margin-left: 3px;
    width: 270px;
    box-sizing: border-box;
    font-size: 15px;
    letter-spacing: 0.8px;
    color: #ddd;
  }

  .hic {
    margin-left: auto;
    margin-right: 14px;
  }

  .hic.last {
    margin-left: 0;
    margin-right: 12px;
  }

  .pair.sel {
    margin-bottom: 0;
  }

  .field.big {
    flex: 1;
    margin: 0;
    font-size: 14px;
  }

  .field.big .fval {
    padding-left: 6px;
  }

  .group {
    flex: none;
    margin: 10px 17px 0 13px;
    border-top: 1px solid #333;
  }

  .group.fontg {
    margin-top: 5px;
  }

  .ghead {
    height: 30px;
    margin-bottom: 4px;
    display: flex;
    align-items: center;
    justify-content: space-between;
    font-size: 12px;
    color: #ccc;
  }

  .prop {
    display: flex;
    align-items: center;
    margin-bottom: 10px;
    height: 28px;
  }

  .prop.short.radio {
    margin-bottom: 8px;
    height: 24px;
    align-items: flex-start;
  }

  .plabel {
    font-size: 12px;
    color: #bbb;
    width: 46px;
    flex: none;
  }

  .plabel.indent {
    padding-left: 12px;
    box-sizing: border-box;
  }

  .prop.short .plabel {
    width: 34px;
  }

  .plabel.low {
    padding-top: 5px;
  }

  .field.grow {
    flex: 1;
    margin: 0;
  }

  .colorbox {
    position: relative;
    justify-content: center;
  }

  .hex {
    font-size: 12px;
    letter-spacing: 0.3px;
    color: #ddd;
  }

  .swatch {
    position: absolute;
    right: 6px;
    top: 5px;
    width: 18px;
    height: 18px;
    border-radius: 3px;
    background: #fff;
  }

  .swatch.dark {
    background: #212121;
  }

  .slider {
    position: relative;
    width: 146px;
    height: 4px;
    margin-left: 6px;
    background: #0a9fe6;
    border-radius: 2px;
  }

  .slider .knob {
    position: absolute;
    right: -5px;
    top: -4px;
    width: 8px;
    height: 8px;
    border: 2px solid #9de1fb;
    background: #0a9fe6;
    border-radius: 50%;
  }

  .slval {
    margin-left: auto;
    margin-right: 6px;
    font-size: 12px;
    letter-spacing: 0.3px;
  }

  .radios {
    display: flex;
    gap: 15px;
    height: 22px;
    font-size: 12px;
    color: #bbb;
  }

  .rad {
    display: flex;
    align-items: center;
    gap: 7px;
  }

  .dot {
    width: 12px;
    height: 12px;
    background: #fff;
    border-radius: 50%;
    box-sizing: border-box;
  }

  .dot.on {
    background: #000;
    border: 3px solid #fff;
  }

  .fontsel {
    display: flex;
    gap: 5px;
    margin: 0 0 11px 34px;
  }

  .field.fname {
    width: 161px;
    margin: 0;
  }

  .field.fsize {
    width: 50px;
    margin: 0;
  }

  .alignbox {
    justify-content: space-around;
    border-radius: 5px 5px 0 0;
    height: 30px;
  }
</style>
